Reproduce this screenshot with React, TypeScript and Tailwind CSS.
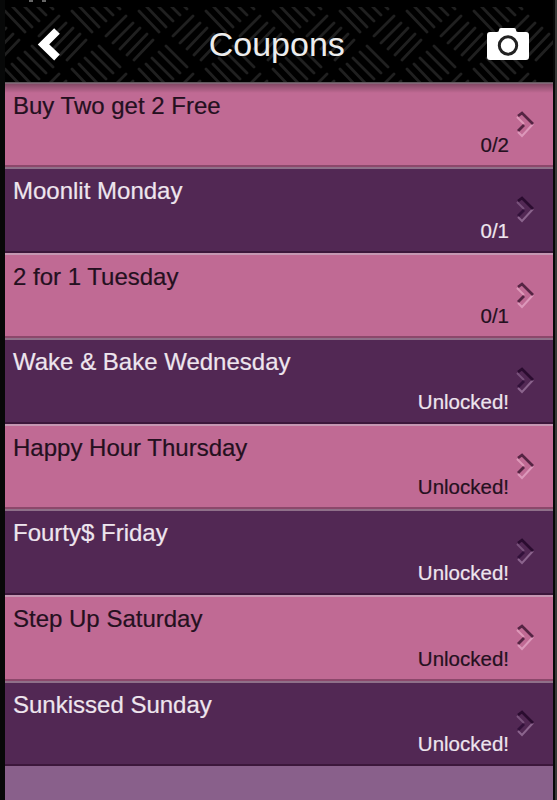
const coupons = [
  { title: 'Buy Two get 2 Free', status: '0/2' },
  { title: 'Moonlit Monday', status: '0/1' },
  { title: '2 for 1 Tuesday', status: '0/1' },
  { title: 'Wake & Bake Wednesday', status: 'Unlocked!' },
  { title: 'Happy Hour Thursday', status: 'Unlocked!' },
  { title: 'Fourty$ Friday', status: 'Unlocked!' },
  { title: 'Step Up Saturday', status: 'Unlocked!' },
  { title: 'Sunkissed Sunday', status: 'Unlocked!' },
];

const columns = [-1, 0, 1, 2, 3, 4, 5, 6, 7];
const rows = [-1, 0, 1];

function TreadPlate() {
  return (
    <svg className="absolute inset-0 h-full w-full" aria-hidden="true">
      <g stroke="#202020" strokeWidth="2.8" strokeLinecap="round">
        {rows.map((row) =>
          columns.map((column) => (
            <path
              key={`${row}-${column}`}
              transform={`translate(${column * 67 - 5} ${row * 58 - 7})`}
              d="M39 36l20-20M46 43l20-20M53 49l20-21M60 55l20-21M67 60l19-20M32 46l21 21M25 52l21 21M18 58l21 21M12 64l20 21M5 69l20 21"
            />
          ))
        )}
      </g>
    </svg>
  );
}

function Chevron({ dark }: { dark: boolean }) {
  return (
    <svg className="h-[30px] w-5" viewBox="0 0 20 30" fill="none">
      <path d="M3 8l7 7" stroke={dark ? '#79527b' : '#dd98b8'} strokeWidth="2" />
      <path d="M4 22l6-6" stroke={dark ? '#32113a' : '#552443'} strokeWidth="2.8" />
      <path d="M4 23l4 4 11-12" stroke={dark ? '#8b648d' : '#dc98ba'} strokeWidth="2" />
      <path d="M4 7l4-3 11 11" stroke={dark ? '#2b0c30' : '#552443'} strokeWidth="2.8" />
    </svg>
  );
}

export default function App() {
  return (
    <div className="flex h-[800px] w-[557px] flex-col overflow-hidden border-r-2 border-[#383838] bg-[#070808] pr-[2px] pl-[4.5px] font-['Liberation_Sans',Arial,sans-serif]">
      <div className="flex h-[7px] shrink-0 gap-[9px] bg-black pl-[24px]">
        <span className="h-[2px] w-1 bg-[#666]" />
        <span className="h-[2px] w-1 bg-[#666]" />
      </div>
      <header className="relative flex h-[74.5px] shrink-0 items-center justify-between bg-black">
        <TreadPlate />
        <svg className="relative ml-8 h-[34px] w-6" viewBox="0 0 24 34" fill="none" stroke="#fff" strokeWidth="8">
          <path d="M20 4L6.5 17.5l13.500 13" />
        </svg>
        <h1 className="relative left-[3px] text-[34px] text-[#ededed]">Coupons</h1>
        <svg className="relative mr-6 h-8 w-[42px]" viewBox="0 0 42 32">
          <path d="M3 4h7q2 0 2-2 0-2 2-2h13q2 0 2 2 0 2 2 2h8q3 0 3 3v22q0 3-3 3H3q-3 0-3-3V7q0-3 3-3z" fill="#fff" />
          <circle cx="21" cy="17.500" r="8.7" fill="none" stroke="#222" strokeWidth="3" />
        </svg>
      </header>
      <main className="relative flex flex-1 flex-col bg-[#89608b]">
        <div className="absolute inset-x-0 top-0 z-10 h-[11px] border-t border-[#62585e] bg-linear-to-b from-black/35 to-transparent" />
        {coupons.map((coupon, index) => {
          const dark = index % 2 === 1;
          return (
            <div
              key={coupon.title}
              className={`flex h-[85.6px] shrink-0 justify-between border-t-2 border-b-2 pl-[8.5px] ${
                dark
                  ? 'border-t-[#8f7089] border-b-[#3c173b] bg-[#522854] text-[#eee5ee]'
                  : 'border-t-[#c597b2] border-b-[#8c486b] bg-[#c06a94] text-[#241020]'
              }`}
            >
              <span className="pt-2 text-[24px] leading-[27px] [-webkit-text-stroke:0.2px]">{coupon.title}</span>
              <div className="flex">
                <span className="self-end pb-2 text-[20.5px] leading-6 [-webkit-text-stroke:0.2px]">{coupon.status}</span>
                <div className="mt-[25px] ml-[5px] w-[39px]">
                  <Chevron dark={dark} />
                </div>
              </div>
            </div>
          );
        })}
      </main>
    </div>
  );
}
